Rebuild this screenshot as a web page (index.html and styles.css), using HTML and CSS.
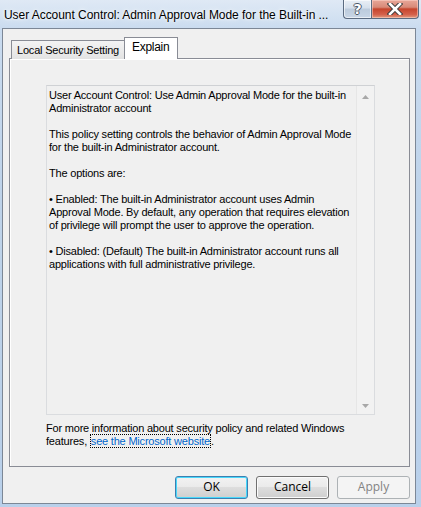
FILE: index.html
```html
<!DOCTYPE html>
<html>
<head>
<meta charset="utf-8">
<link rel="stylesheet" href="styles.css">
</head>
<body>
<div class="window">
  <div class="titlebar">
    <div class="title">User Account Control: Admin Approval Mode for the Built-in ...</div>
    <div class="caption-buttons">
      <div class="cap-btn help"><span>?</span></div>
      <div class="cap-btn close">
        <svg width="16" height="12" viewBox="0 0 16 12"><path d="M3 1 L13 11 M13 1 L3 11" stroke="#3a3a3a" stroke-width="4.5" stroke-linecap="square"/><path d="M3 1 L13 11 M13 1 L3 11" stroke="#ffffff" stroke-width="2.6" stroke-linecap="square"/></svg>
      </div>
    </div>
  </div>
  <div class="client">
    <div class="tabs">
      <div class="tab">Local Security Setting</div>
      <div class="tab active">Explain</div>
    </div>
    <div class="sheet">
      <div class="textbox">
        <div class="text">
          <p>User Account Control: Use Admin Approval Mode for the built-in Administrator account</p>
          <p>This policy setting controls the behavior of Admin Approval Mode for the built-in Administrator account.</p>
          <p>The options are:</p>
          <p>• Enabled: The built-in Administrator account uses Admin Approval Mode. By default, any operation that requires elevation of privilege will prompt the user to approve the operation.</p>
          <p>• Disabled: (Default) The built-in Administrator account runs all applications with full administrative privilege.</p>
        </div>
        <div class="scrollbar">
          <svg class="arrow" width="7" height="4" viewBox="0 0 7 4"><path d="M0 4 L3.5 0 L7 4 Z" fill="#a8a8a8"/></svg>
          <svg class="arrow" width="7" height="4" viewBox="0 0 7 4"><path d="M0 0 L3.5 4 L7 0 Z" fill="#a8a8a8"/></svg>
        </div>
      </div>
      <div class="more">For more information about security policy and related Windows features, <a class="link">see the Microsoft website</a>.</div>
    </div>
    <div class="buttons">
      <div class="btn default">OK</div>
      <div class="btn">Cancel</div>
      <div class="btn disabled">Apply</div>
    </div>
  </div>
</div>
</body>
</html>
```
FILE: styles.css
```css
html, body {
  margin: 0;
  padding: 0;
  background: #c6d8ec;
}
.window {
  width: 421px;
  height: 507px;
  box-sizing: border-box;
  background: linear-gradient(#dfe9f5 0px, #c9dbef 30px, #bed3ea 200px, #b9d0ea 507px);
  display: flex;
  flex-direction: column;
  font-family: "Liberation Sans", Arial, sans-serif;
}
.titlebar {
  height: 28px;
  display: flex;
  justify-content: space-between;
  align-items: flex-start;
  padding-left: 4px;
  padding-right: 2px;
  flex: none;
}
.title {
  font-family: "Liberation Sans", Arial, sans-serif;
  font-size: 12px;
  color: #000;
  margin-top: 8px;
  white-space: nowrap;
  letter-spacing: -0.05px;
  text-shadow: 0 0 6px #ffffff, 0 0 3px #ffffff;
}
.caption-buttons {
  display: flex;
  height: 19px;
}
.cap-btn {
  height: 18px;
  border: 1px solid #5b6b80;
  border-top: none;
  display: flex;
  align-items: center;
  justify-content: center;
}
.help {
  width: 27px;
  border-radius: 0 0 0 4px;
  border-right: none;
  background: linear-gradient(#e9eff6 0%, #d6e0ec 45%, #bccbdc 50%, #c8d6e6 100%);
  box-shadow: inset 0 0 0 1px rgba(255,255,255,0.6);
}
.help span {
  font-family: "DejaVu Sans", sans-serif;
  font-weight: bold;
  font-size: 14px;
  color: #fff;
  line-height: 14px;
  text-shadow: -1px 0 #4a5666, 1px 0 #4a5666, 0 -1px #4a5666, 0 1px #4a5666;
}
.close {
  width: 46px;
  border-radius: 0 0 4px 0;
  background: linear-gradient(#e8a799 0%, #d88a78 40%, #c6452d 50%, #d4604a 80%, #e09a7e 100%);
  box-shadow: inset 0 0 0 1px rgba(255,220,210,0.5);
}
.client {
  flex: 1;
  margin: 0 5px 3px 2px;
  border: 1px solid #7c8796;
  background: #f0f0f0;
  display: flex;
  flex-direction: column;
  padding: 8px 5px 0 6px;
  box-sizing: border-box;
}
.tabs {
  display: flex;
  align-items: flex-end;
  height: 22px;
  padding-left: 2px;
  position: relative;
  z-index: 1;
  margin-bottom: -1px;
}
.tab {
  height: 19px;
  box-sizing: border-box;
  border: 1px solid #898c95;
  border-bottom: none;
  border-right: none;
  padding: 0 5px;
  font-family: "Liberation Sans", Arial, sans-serif;
  font-size: 11px;
  line-height: 18px;
  color: #000;
  background: linear-gradient(#f3f3f3, #e3e3e3);
  letter-spacing: -0.2px;
  white-space: nowrap;
}
.tab.active {
  height: 22px;
  background: #ffffff;
  padding: 0 8px 0 7px;
  border-right: 1px solid #898c95;
  line-height: 19px;
  font-size: 12px;
  letter-spacing: -0.3px;
}
.sheet {
  height: 409px;
  border: 1px solid #898c95;
  background: #f0f0f0;
  box-shadow: inset 1px 1px 0 #ffffff;
  padding: 26px 34px 0 36px;
  box-sizing: border-box;
  display: flex;
  flex-direction: column;
}
.textbox {
  height: 328px;
  border: 1px solid #dadcdf;
  border-top-color: #cfd1d4;
  display: flex;
  background: #f0f0f0;
  flex: none;
}
.text {
  flex: 1;
  padding: 3px 2px 0 2px;
  font-size: 11px;
  line-height: 13px;
  color: #000;
  letter-spacing: -0.2px;
}
.text p {
  margin: 0 0 13px 0;
}
.scrollbar {
  width: 17px;
  border-left: 1px solid #e6e6e6;
  background: #f2f2f2;
  display: flex;
  flex-direction: column;
  justify-content: space-between;
  align-items: center;
  padding: 9px 0 6px 0;
}
.more {
  margin-top: 7px;
  font-size: 11px;
  line-height: 13px;
  color: #000;
  letter-spacing: -0.2px;
}
.link {
  color: #0066cc;
  border: 1px dotted #000;
  border-left-width: 1px;
}
.buttons {
  display: flex;
  justify-content: flex-end;
  gap: 8px;
  padding-top: 9px;
  padding-right: 0;
}
.btn {
  width: 73px;
  height: 23px;
  box-sizing: border-box;
  border: 1px solid #707070;
  border-radius: 3px;
  background: linear-gradient(#f2f2f2 0%, #ebebeb 45%, #dddddd 50%, #cfcfcf 100%);
  box-shadow: inset 0 0 0 1px #fbfbfb;
  font-family: "Open Sans", "Liberation Sans", sans-serif;
  font-size: 12px;
  line-height: 20px;
  text-align: center;
  color: #000;
}
.btn.default {
  border-color: #3c7fb1;
  box-shadow: inset 0 0 0 1px #48d8fb;
}
.btn.disabled {
  border-color: #adb2b5;
  background: #f4f4f4;
  box-shadow: none;
  color: #838383;
}
```
